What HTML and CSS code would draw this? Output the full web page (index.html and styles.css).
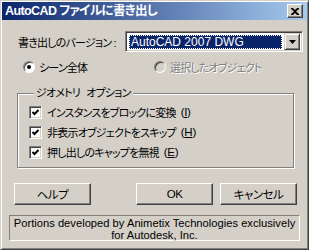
FILE: index.html
```html
<!DOCTYPE html>
<html lang="ja">
<head>
    <meta charset="UTF-8">
    <title>AutoCAD ファイルに書き出し</title>
    <link rel="stylesheet" href="styles.css">
</head>
<body>
    <div class="window">
        <div class="titlebar">
            <span class="title">AutoCAD ファイルに書き出し</span>
            <span class="close">
                <svg width="8" height="7" viewBox="0 0 8 7"><path d="M0 0h2l2 2 2-2h2v1L5 3.5 8 6v1H6L4 5 2 7H0V6l3-2.5L0 1z" fill="#000"/></svg>
            </span>
        </div>

        <div class="version-row">
            <span class="label">書き出しのバージョン :</span>
            <div class="select">
                <span class="selected">AutoCAD 2007 DWG</span>
                <span class="drop">
                    <svg width="7" height="4" viewBox="0 0 7 4"><path d="M0 0h7L3.5 4z" fill="#000"/></svg>
                </span>
            </div>
        </div>

        <div class="radio-row">
            <label class="radio first"><span class="dot on"></span>シーン全体</label>
            <label class="radio disabled"><span class="dot"></span>選択したオブジェクト</label>
        </div>

        <fieldset class="group">
            <legend>ジオメトリ オプション</legend>
            <label class="check"><span class="box"><svg width="9" height="9" viewBox="0 0 9 9"><path d="M1.5 4l2 2 4-4" stroke="#000" stroke-width="2" fill="none"/></svg></span>インスタンスをブロックに変換<span class="key">(<u>I</u>)</span></label>
            <label class="check"><span class="box"><svg width="9" height="9" viewBox="0 0 9 9"><path d="M1.5 4l2 2 4-4" stroke="#000" stroke-width="2" fill="none"/></svg></span>非表示オブジェクトをスキップ<span class="key">(<u>H</u>)</span></label>
            <label class="check"><span class="box"><svg width="9" height="9" viewBox="0 0 9 9"><path d="M1.5 4l2 2 4-4" stroke="#000" stroke-width="2" fill="none"/></svg></span>押し出しのキャップを無視<span class="key">(<u>E</u>)</span></label>
        </fieldset>

        <div class="buttons">
            <button class="help">ヘルプ</button>
            <button class="ok">OK</button>
            <button class="cancel">キャンセル</button>
        </div>

        <div class="credits">
            Portions developed by Animetix Technologies exclusively<br>
            for Autodesk, Inc.
        </div>
    </div>
</body>
</html>
```

FILE: styles.css
```css
html, body {
    margin: 0;
    padding: 0;
}
body {
    font-family: "Liberation Sans", "Noto Sans CJK JP", sans-serif;
    font-size: 11px;
    letter-spacing: -0.8px;
    font-feature-settings: "palt";
    color: #000;
    background: #d4d0c8;
}
.window {
    width: 309px;
    height: 250px;
    box-sizing: border-box;
    padding: 1px;
    border: 1px solid;
    border-color: #d4d0c8 #404040 #404040 #d4d0c8;
    box-shadow: inset 1px 1px #fff, inset -1px -1px #808080;
    background: #d4d0c8;
    overflow: hidden;
}
.titlebar {
    height: 18px;
    display: flex;
    align-items: center;
    justify-content: space-between;
    padding: 0 4px 0 3px;
    background: linear-gradient(to right, #0a246a, #a6caf0);
}
.title {
    color: #fff;
    font-weight: bold;
    font-size: 12.5px;
    letter-spacing: -0.6px;
    line-height: 18px;
}
.close {
    width: 16px;
    height: 14px;
    box-sizing: border-box;
    display: flex;
    align-items: center;
    justify-content: center;
    background: #d4d0c8;
    border: 1px solid;
    border-color: #fff #404040 #404040 #fff;
    box-shadow: inset -1px -1px #808080;
}
.version-row {
    display: flex;
    align-items: center;
    height: 21px;
    margin-top: 11px;
    padding-left: 16px;
}
.label {
    width: 107px;
    flex: none;
    white-space: nowrap;
}
.select {
    width: 178px;
    flex: none;
    height: 21px;
    box-sizing: border-box;
    display: flex;
    align-items: center;
    padding: 2px;
    background: #fff;
    border: 1px solid;
    border-color: #808080 #fff #fff #808080;
    box-shadow: inset 1px 1px #404040, inset -1px -1px #d4d0c8;
}
.selected {
    flex: 1;
    height: 14px;
    line-height: 14px;
    margin-left: 1px;
    padding-left: 2px;
    background: #0a246a;
    color: #fff;
    font-size: 12px;
    letter-spacing: 0;
    outline: 1px dotted #fff;
    outline-offset: -1px;
}
.drop {
    width: 16px;
    height: 17px;
    box-sizing: border-box;
    margin-left: 2px;
    display: flex;
    align-items: center;
    justify-content: center;
    background: #d4d0c8;
    border: 1px solid;
    border-color: #d4d0c8 #404040 #404040 #d4d0c8;
    box-shadow: inset 1px 1px #fff, inset -1px -1px #808080;
}
.radio-row {
    display: flex;
    height: 13px;
    margin-top: 8px;
    padding-left: 21px;
}
.radio {
    display: flex;
    align-items: center;
    gap: 4px;
    white-space: nowrap;
}
.radio.first {
    width: 131px;
}
.radio.disabled {
    color: #808080;
    text-shadow: 1px 1px #fff;
}
.dot {
    width: 12px;
    height: 12px;
    flex: none;
    box-sizing: border-box;
    border-radius: 50%;
    background: #fff;
    border: 1px solid;
    border-color: #808080 #fff #fff #808080;
    box-shadow: inset 1px 1px #404040;
    position: relative;
}
.radio.disabled .dot {
    background: #d4d0c8;
}
.dot.on::after {
    content: "";
    position: absolute;
    left: 3px;
    top: 3px;
    width: 4px;
    height: 4px;
    border-radius: 50%;
    background: #000;
}
.group {
    margin: 13px 13px 0 15px;
    padding: 2px 0 5px 11px;
    border: 1px solid #808080;
    box-shadow: inset 1px 1px #fff, 1px 1px #fff;
    min-width: 0;
}
.group legend {
    padding: 0 2px;
    margin-left: 5px;
    line-height: 14px;
    word-spacing: 4px;
    background: #d4d0c8;
}
.check {
    display: flex;
    align-items: center;
    gap: 5px;
    height: 20px;
    white-space: nowrap;
}
.key {
    letter-spacing: -0.3px;
    font-size: 11.5px;
}
.box {
    width: 13px;
    height: 13px;
    flex: none;
    box-sizing: border-box;
    display: flex;
    align-items: center;
    justify-content: center;
    background: #fff;
    border: 1px solid;
    border-color: #808080 #fff #fff #808080;
    box-shadow: inset 1px 1px #404040, inset -1px -1px #d4d0c8;
}
.buttons {
    display: flex;
    margin-top: 15px;
    padding-left: 12px;
}
button {
    width: 77px;
    height: 22px;
    font-family: inherit;
    font-size: 11.5px;
    letter-spacing: -0.5px;
    font-feature-settings: "palt";
    padding: 0;
    background: #d4d0c8;
    border: 1px solid;
    border-color: #fff #404040 #404040 #fff;
    box-shadow: inset -1px -1px #808080;
}
.ok {
    margin-left: 45px;
}
.cancel {
    margin-left: 7px;
}
.credits {
    margin: 10px 7px 0 7px;
    height: 26px;
    box-sizing: border-box;
    padding-top: 1px;
    border: 1px solid;
    border-color: #808080 #fff #fff #808080;
    text-align: center;
    white-space: nowrap;
    font-size: 11.2px;
    letter-spacing: 0;
    line-height: 12px;
}
```
